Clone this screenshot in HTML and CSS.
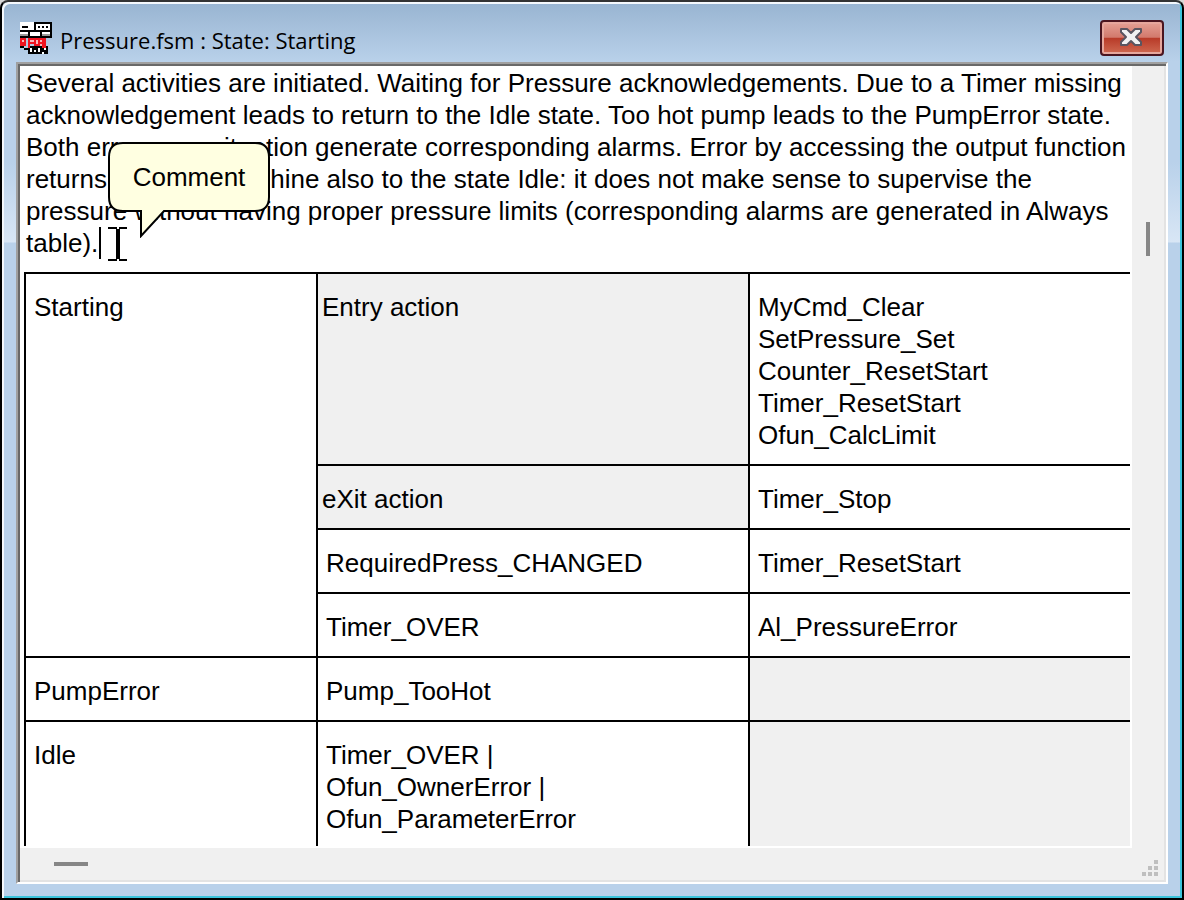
FILE: index.html
```
<!DOCTYPE html>
<html lang="en">
<head>
    <meta charset="utf-8">
    <title>Pressure.fsm : State: Starting</title>
    <link rel="stylesheet" href="styles.css">
</head>
<body>
<div class="window">
    <header class="titlebar">
        <svg class="app-icon" viewBox="0 0 16 16" shape-rendering="crispEdges">
            <path fill="#fff" d="M0 0h15v7H0z"/>
            <path fill="#000" d="M7 0h1v4H7zM8 0h8v1H8zM15 0h1v8h-1zM0 4h16v1H0zM1 2h3v1H1zM9 2h1v1H9zM11 2h1v1h-1zM13 2h1v1h-1zM4 5h1v2H4zM10 5h1v2h-1zM0 7h16v1H0zM4 12h10v4H4zM0 12h2v1H0zM2 13h2v1H2z"/>
            <path fill="#999" d="M0 6h4v1H0zM11 6h4v1h-4z"/>
            <path fill="#f01420" d="M0 8h3v4H0zM4 8h9v1H4zM4 9h1v4H4zM5 10h2v1H5zM7 9h1v3H7zM8 11h1v1H8zM9 9h1v3H9zM10 10h1v1h-1zM11 9h2v4h-2z"/>
            <path fill="#f7b6bb" d="M1 9h1v1H1zM5 9h2v1H5zM8 9h1v2H8zM10 9h1v1h-1zM10 11h1v1h-1z"/>
            <path fill="#fff" d="M5 13h1v2H5zM7 14h1v1H7zM9 13h1v2H9zM12 13h1v1h-1zM11 15h1v1h-1z"/>
        </svg>
        <h1>Pressure.fsm : State: Starting</h1>
        <button class="close-button" type="button" aria-label="Close">
            <svg viewBox="0 0 22 18">
                <path d="M1 1h6l4 4 4-4h6v3l-5 5 5 5v3h-6l-4-4-4 4H1v-3l5-5-5-5z" fill="#f2f2f2" stroke="#5a5560" stroke-width="2" stroke-linejoin="round"/>
            </svg>
        </button>
    </header>
    <main class="client">
        <div class="pane">
            <div class="description">
                <p contenteditable="true" spellcheck="false">Several activities are initiated. Waiting for Pressure acknowledgements. Due to a Timer missing<br>
                acknowledgement leads to return to the Idle state. Too hot pump leads to the PumpError state.<br>
                Both erroneous situation generate corresponding alarms. Error by accessing the output function<br>
                returns the state machine also to the state Idle: it does not make sense to supervise the<br>
                pressure without having proper pressure limits (corresponding alarms are generated in Always<br>
                table).<span class="caret"></span></p>
                <div class="callout">
                    <svg viewBox="0 0 162 96">
                        <path d="M15 1H147Q161 1 161 15V55Q161 69 147 69H56L33 94V69H15Q1 69 1 55V15Q1 1 15 1Z" fill="#ffffe1" stroke="#000" stroke-width="2"/>
                    </svg>
                    <span>Comment</span>
                </div>
                <svg class="text-cursor" viewBox="0 0 20 34" shape-rendering="crispEdges">
                    <path d="M0 0h9v2H0zM11 0h8v2h-8zM8 2h4v30H8zM0 32h9v2H0zM11 32h8v2h-8z" fill="#000"/>
                </svg>
            </div>
            <table>
                <colgroup>
                    <col class="col-state">
                    <col class="col-condition">
                    <col>
                </colgroup>
                <tbody>
                <tr>
                    <td rowspan="4">Starting</td>
                    <td class="fixed">Entry action</td>
                    <td>MyCmd_Clear<br>SetPressure_Set<br>Counter_ResetStart<br>Timer_ResetStart<br>Ofun_CalcLimit</td>
                </tr>
                <tr>
                    <td class="fixed">eXit action</td>
                    <td>Timer_Stop</td>
                </tr>
                <tr>
                    <td>RequiredPress_CHANGED</td>
                    <td>Timer_ResetStart</td>
                </tr>
                <tr>
                    <td>Timer_OVER</td>
                    <td>Al_PressureError</td>
                </tr>
                <tr>
                    <td>PumpError</td>
                    <td>Pump_TooHot</td>
                    <td class="fixed"></td>
                </tr>
                <tr>
                    <td>Idle</td>
                    <td>Timer_OVER |<br>Ofun_OwnerError |<br>Ofun_ParameterError</td>
                    <td class="fixed"></td>
                </tr>
                </tbody>
            </table>
        </div>
        <div class="scroll-v"><div class="thumb"></div></div>
        <div class="scroll-h"><div class="thumb"></div></div>
        <div class="grip">
            <svg viewBox="0 0 16 16" shape-rendering="crispEdges">
                <path d="M12 0h4v4h-4zM6 6h4v4H6zM12 6h4v4h-4zM0 12h4v4H0zM6 12h4v4H6zM12 12h4v4h-4z" fill="#bfbfbf"/>
            </svg>
        </div>
    </main>
</div>
</body>
</html>
```
FILE: styles.css
```
* {
	box-sizing: border-box;
}

body {
	margin: 0;
	background-color: #d8d8d8;
	font-family: "Liberation Sans", Arial, sans-serif;
	font-size: 26px;
	line-height: 32px;
	color: #000000;
}

.window {
	display: flex;
	flex-direction: column;
	height: 100vh;
	padding: 2px 14px 14px;
	border: 2px solid #000000;
	border-top-color: #333333;
	border-radius: 8px 8px 0 0;
	box-shadow: inset 2px 2px 0 #f4f8fc, inset -2px -2px 0 #3cc4dc;
	background: linear-gradient(#98b4d1, #b9d1ea 60px, #b9d1ea 160px, #d8e6f5 240px, #b9d1ea 241px);
}

/* title bar */
.titlebar {
	display: flex;
	align-items: center;
	height: 58px;
	flex: none;
	padding: 0 4px;
}

.app-icon {
	width: 32px;
	height: 32px;
	margin-top: 10px;
}

.titlebar h1 {
	flex: 1;
	margin: 14px 0 0 8px;
	font-family: "Open Sans", sans-serif;
	font-size: 22px;
	font-weight: normal;
}

.close-button {
	display: flex;
	align-items: center;
	justify-content: center;
	width: 64px;
	height: 36px;
	margin-top: 10px;
	padding: 0 2px 2px 0;
	border: 2px solid #4a1520;
	border-radius: 4px;
	box-shadow: inset 0 0 0 2px #e6a79d;
	background: linear-gradient(#e5a196, #d2796c 48%, #b83a28 50%, #cf6a52);
}

.close-button svg {
	width: 22px;
	height: 18px;
}

/* client area */
.client {
	flex: 1;
	min-height: 0;
	display: grid;
	grid-template-columns: minmax(0, 1fr) 32px;
	grid-template-rows: minmax(0, 1fr) 32px;
	border: 2px solid;
	border-color: #a0a0a0 #ffffff #ffffff #a0a0a0;
	box-shadow: inset 2px 2px 0 #696969, inset -2px -2px 0 #e3e3e3;
	background-color: #f0f0f0;
	padding: 2px;
}

.pane {
	overflow: hidden;
	padding-left: 4px;
	border-right: 2px solid #ffffff;
	border-bottom: 2px solid #ffffff;
	background-color: #ffffff;
}

.description {
	position: relative;
	padding: 1px 0 13px 2px;
	white-space: nowrap;
}

.description p {
	margin: 0;
	outline: none;
}

.caret {
	display: inline-block;
	width: 2px;
	height: 32px;
	margin-left: 1px;
	vertical-align: top;
	background-color: #000000;
}

.callout {
	position: absolute;
	left: 84px;
	top: 76px;
	width: 162px;
	height: 96px;
}

.callout svg {
	display: block;
}

.callout span {
	position: absolute;
	top: 19px;
	left: 0;
	right: 0;
	text-align: center;
}

.text-cursor {
	position: absolute;
	left: 84px;
	top: 161px;
	width: 20px;
	height: 34px;
}

/* state table */
table {
	width: 100%;
	table-layout: fixed;
	border-collapse: separate;
	border-spacing: 0;
	border-left: 2px solid #000000;
}

.col-state {
	width: 292px;
}

.col-condition {
	width: 432px;
}

td {
	padding: 17px 8px 13px;
	border-top: 2px solid #000000;
	border-right: 2px solid #000000;
	vertical-align: top;
	white-space: nowrap;
}

td:last-child {
	border-right: none;
}

td.fixed {
	padding-left: 4px;
	background-color: #f0f0f0;
}

/* scroll bars */
.scroll-v {
	padding: 156px 0 0 14px;
}

.scroll-v .thumb {
	width: 4px;
	height: 34px;
	background-color: #868686;
}

.scroll-h {
	padding: 14px 0 0 34px;
}

.scroll-h .thumb {
	width: 34px;
	height: 4px;
	background-color: #868686;
}

.grip {
	padding: 12px 0 0 10px;
}

.grip svg {
	display: block;
	width: 16px;
	height: 16px;
}
```
